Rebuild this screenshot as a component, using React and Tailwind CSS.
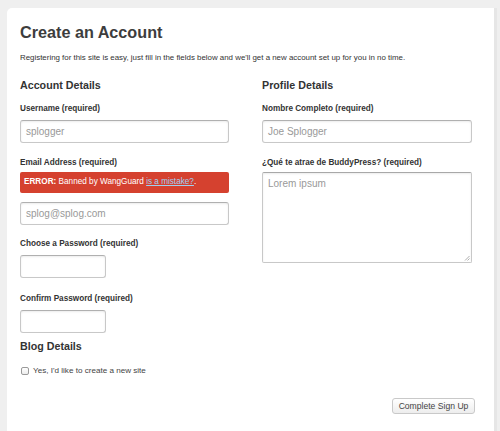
export default function App() {
  const font = { fontFamily: '"Liberation Sans", Arial, sans-serif' };
  const label = "block text-[8.2px] leading-[10px] font-bold text-[#333]";
  const input =
    "block h-[23px] rounded-[3px] border border-[#c8c8c8] border-t-[#b0b0b0] bg-white px-[5px] text-[10px] text-[#999] shadow-[inset_0_1px_2px_rgba(0,0,0,0.08)] flex items-center";
  const heading = "text-[10.7px] leading-[14px] font-bold text-[#333]";
  return (
    <div
      className="w-[500px] h-[431px] overflow-hidden bg-[#efefef] pt-[8px] pl-[7px] pr-[3px]"
      style={font}
    >
      <div className="h-[423px] bg-white rounded-tl-[5px] pl-[13px] pt-[14px] border-r-[3px] border-[#e6e6e6]">
        <h1 className="text-[16.2px] leading-[20px] font-bold text-[#3d3d3d]">
          Create an Account
        </h1>
        <p className="mt-[10px] text-[7.9px] leading-[12px] text-[#333]">
          Registering for this site is easy, just fill in the fields below and we'll get a new account set up for you in no time.
        </p>
        <div className="mt-[14px] grid grid-cols-[209px_210px] gap-x-[33px]">
          <div>
            <h2 className={heading}>Account Details</h2>
            <label className={`${label} mt-[12px]`}>Username (required)</label>
            <div className={`${input} mt-[6px] w-[209px]`}>splogger</div>
            <label className={`${label} mt-[15px]`}>Email Address (required)</label>
            <div className="mt-[4px] h-[21px] w-[209px] rounded-[2px] bg-[#d5412f] flex items-center pl-[4px] text-[8.2px] text-white">
              <span className="font-bold">ERROR:</span>
              <span>&nbsp;Banned by WangGuard&nbsp;</span>
              <span className="underline text-[#9fd0ef]">is a mistake?</span>
              <span>.</span>
            </div>
            <div className={`${input} mt-[9px] w-[209px]`}>splog@splog.com</div>
            <label className={`${label} mt-[14px]`}>Choose a Password (required)</label>
            <div className={`${input} mt-[6px] w-[86px]`}></div>
            <label className={`${label} mt-[16px]`}>Confirm Password (required)</label>
            <div className={`${input} mt-[6px] w-[86px]`}></div>
            <h2 className={`${heading} mt-[6px]`}>Blog Details</h2>
            <div className="mt-[13px] flex items-center h-[10px] pl-[1px]">
              <span className="block w-[8px] h-[8px] rounded-[2px] border border-[#9a9a9a] bg-gradient-to-b from-white to-[#ececec]"></span>
              <span className="ml-[4px] text-[8.1px] leading-[10px] text-[#444]">
                Yes, I'd like to create a new site
              </span>
            </div>
          </div>
          <div>
            <h2 className={heading}>Profile Details</h2>
            <label className={`${label} mt-[12px]`}>Nombre Completo (required)</label>
            <div className={`${input} mt-[6px] w-[210px]`}>Joe Splogger</div>
            <label className={`${label} mt-[15px]`}>¿Qué te atrae de BuddyPress? (required)</label>
            <div className="relative mt-[4px] h-[91px] w-[210px] rounded-[2px] border border-[#c8c8c8] border-t-[#a8a8a8] bg-white px-[5px] pt-[5px] text-[10px] leading-[12px] text-[#999] shadow-[inset_0_1px_2px_rgba(0,0,0,0.08)]">
              Lorem ipsum
              <svg className="absolute right-[1px] bottom-[1px]" width="6" height="6" viewBox="0 0 6 6">
                <path d="M5.5 1 L1 5.5 M5.5 3.5 L3.5 5.5" stroke="#999" strokeWidth="0.8" />
              </svg>
            </div>
          </div>
        </div>
        <div className="mt-[22px] w-[455px] flex justify-end">
          <div className="h-[16px] w-[83px] rounded-[3px] border border-[#c9c9c9] bg-gradient-to-b from-white to-[#ededed] flex items-center justify-center text-[8.6px] text-[#444]">
            Complete Sign Up
          </div>
        </div>
      </div>
    </div>
  );
}
